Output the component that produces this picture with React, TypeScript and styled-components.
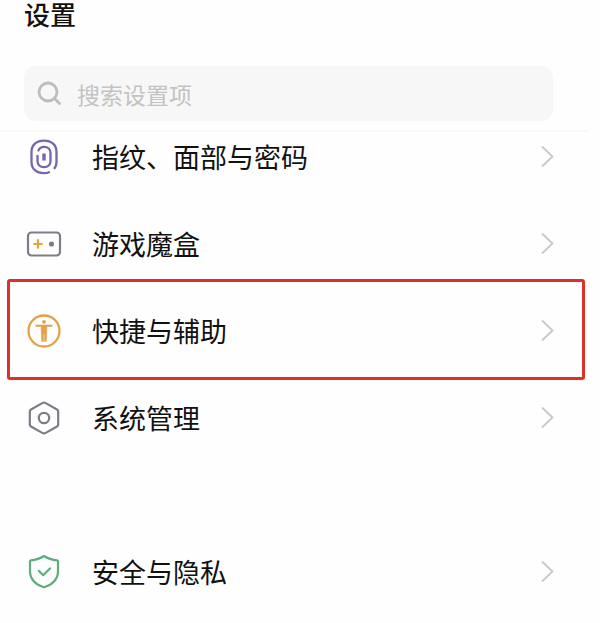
import React from "react";
import styled, { createGlobalStyle, css } from "styled-components";

const GlobalStyle = createGlobalStyle`
  *, *::before, *::after { box-sizing: border-box; }
  body {
    margin: 0;
    background: #fefefe;
    color: #111;
    font-family: "Noto Sans CJK SC", "Noto Sans", sans-serif;
  }
`;

const Page = styled.main`
  padding-bottom: 24px;
`;

const Header = styled.header`
  display: flex;
  flex-direction: column;
  gap: 38px;
  margin-right: 11px;
  padding: 0 36px 9px 24px;
  border-bottom: 2px solid #f8f8f8;
`;

const Title = styled.h1`
  margin: 0;
  font-size: 26px;
  line-height: 28px;
  font-weight: 500;
`;

const SearchBox = styled.label`
  display: flex;
  align-items: center;
  gap: 14px;
  height: 55px;
  padding: 0 13px;
  border-radius: 12px;
  background: #f7f7f7;
`;

const SearchInput = styled.input`
  flex: 1;
  min-width: 0;
  padding: 0;
  border: 0;
  outline: 0;
  background: transparent;
  color: #111;
  font: inherit;
  font-size: 23px;
  line-height: 34px;

  &::placeholder {
    color: #c3c3c3;
    opacity: 1;
  }
`;

const Group = styled.ul`
  display: flex;
  flex-direction: column;
  gap: 37px;
  margin: 0;
  padding: 0;
  list-style: none;

  & + & {
    margin-top: 104px;
  }
`;

const Item = styled.li<{ $highlighted?: boolean }>`
  position: relative;

  ${({ $highlighted }) =>
    $highlighted &&
    css`
      &::after {
        content: "";
        position: absolute;
        inset: -27px 15px -24px 7px;
        border: 3px solid #dc3029;
        border-radius: 3px;
        pointer-events: none;
      }
    `}
`;

const RowLink = styled.a`
  display: flex;
  align-items: center;
  gap: 30px;
  height: 50px;
  padding: 0 46px 0 26px;
  color: inherit;
  text-decoration: none;
`;

const Label = styled.span`
  flex: 1;
  font-size: 27px;
  line-height: 38px;
`;

const Icon = styled.svg`
  flex: none;
  fill: none;
  stroke-linecap: round;
  stroke-linejoin: round;
`;

const SearchIcon = () => (
  <Icon width="26" height="26" viewBox="0 0 26 26" stroke="#bdbdbd" strokeWidth="2.8" aria-hidden="true">
    <circle cx="11" cy="11" r="9" />
    <path d="M17.5 17.5 22.5 22.5" />
  </Icon>
);

const Chevron = () => (
  <Icon width="13" height="22" viewBox="0 0 13 22" stroke="#c9c9c9" strokeWidth="1.8" aria-hidden="true">
    <path d="M1.5 1 11.5 10.5 1.5 20" />
  </Icon>
);

const FingerprintIcon = () => (
  <Icon width="36" height="36" viewBox="0 0 36 36" stroke="#7467ae" strokeWidth="2.3" aria-hidden="true">
    <path d="M23 33.2C21.5 34 20 34.200 18 34.200 10.500 34.200 5.500 30 5.500 23V13C5.500 6 10.500 1.600 18 1.600S30.500 6 30.500 13V23C30.500 25.500 29.800 27.500 28.500 29.200" />
    <path d="M12.500 11.500C13.300 9 15.200 7.800 18 7.800 22 7.800 24.500 10.300 24.500 14V22C24.500 25.700 22 28.200 18 28.200S11.500 25.700 11.500 22V17" />
    <path d="M18 14.500V21.500" strokeWidth="3.400" strokeLinecap="butt" />
  </Icon>
);

const GameIcon = () => (
  <Icon width="36" height="36" viewBox="0 0 36 36" aria-hidden="true">
    <rect x="2" y="6.500" width="32" height="23" rx="3.500" stroke="#7e7e89" strokeWidth="2.200" />
    <path d="M12 14.200V21.800M8.200 18H15.800" stroke="#e5a63d" strokeWidth="2.200" />
    <circle cx="25.500" cy="18" r="2.600" fill="#7e7e89" />
  </Icon>
);

const AccessibilityIcon = () => (
  <Icon width="36" height="36" viewBox="0 0 36 36" stroke="#e2a24a" aria-hidden="true">
    <circle cx="18" cy="18" r="15.500" strokeWidth="2.300" />
    <circle cx="18" cy="8.800" r="1.900" fill="#e2a24a" stroke="none" />
    <path d="M10.300 12.700H25.700" strokeWidth="1.900" />
    <path d="M15.200 12.500H20.800V19L20.300 28.500H18.500V21H17.500V28.500H15.700L15.200 19Z" fill="#e2a24a" strokeWidth="0.500" />
  </Icon>
);

const SystemIcon = () => (
  <Icon width="36" height="36" viewBox="0 0 36 36" stroke="#7b7e87" strokeWidth="2.200" aria-hidden="true">
    <path d="M16.700 2.900Q18 2.200 19.300 2.900L31 9.500Q32.200 10.200 32.200 11.500V24.500Q32.200 25.800 31 26.500L19.300 33.100Q18 33.800 16.700 33.100L5 26.500Q3.800 25.800 3.800 24.500V11.500Q3.800 10.200 5 9.500Z" />
    <circle cx="18" cy="18" r="5.200" />
  </Icon>
);

const ShieldIcon = () => (
  <Icon width="36" height="36" viewBox="0 0 36 36" stroke="#5cae7e" strokeWidth="2.200" aria-hidden="true">
    <path d="M18 2C22 4.800 26.500 6 31.200 6.300Q32 6.400 32 7.300V17C32 24.500 27 30.300 18 33.300 9 30.300 4 24.500 4 17V7.300Q4 6.400 4.800 6.300C9.500 6 14 4.800 18 2Z" />
    <path d="M12.800 16.800 17.200 21.200 24 14.500" />
  </Icon>
);

interface Setting {
  id: string;
  label: string;
  icon: React.ComponentType;
  highlighted?: boolean;
}

const groups: Setting[][] = [
  [
    { id: "biometrics", label: "指纹、面部与密码", icon: FingerprintIcon },
    { id: "games", label: "游戏魔盒", icon: GameIcon },
    { id: "accessibility", label: "快捷与辅助", icon: AccessibilityIcon, highlighted: true },
    { id: "system", label: "系统管理", icon: SystemIcon },
  ],
  [{ id: "security", label: "安全与隐私", icon: ShieldIcon }],
];

export default function App() {
  return (
    <Page lang="zh-CN">
      <GlobalStyle />
      <Header>
        <Title>设置</Title>
        <SearchBox>
          <SearchIcon />
          <SearchInput type="text" placeholder="搜索设置项" aria-label="搜索设置项" />
        </SearchBox>
      </Header>
      <nav aria-label="设置">
        {groups.map((group) => (
          <Group key={group[0].id}>
            {group.map(({ id, label, icon: ItemIcon, highlighted }) => (
              <Item key={id} $highlighted={highlighted}>
                <RowLink href={`#${id}`}>
                  <ItemIcon />
                  <Label>{label}</Label>
                  <Chevron />
                </RowLink>
              </Item>
            ))}
          </Group>
        ))}
      </nav>
    </Page>
  );
}
